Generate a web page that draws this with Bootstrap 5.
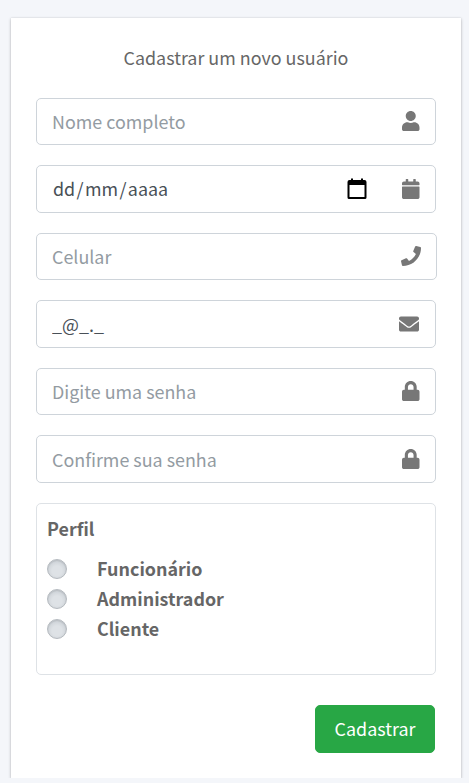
<!DOCTYPE html>
<html lang="pt-BR">
<head>
<meta charset="utf-8">
<meta name="viewport" content="width=device-width, initial-scale=1">
<title>Cadastrar um novo usuário</title>
<link href="https://cdn.jsdelivr.net/npm/bootstrap@5.3.0/dist/css/bootstrap.min.css" rel="stylesheet">
<style>
  body { background: #f4f6fa; color: #666; font-family: "Noto Sans CJK JP", "Noto Sans", sans-serif; font-size: 17.9px; line-height: 30px; }
  .register-box { width: 450px; height: 760px; margin: 18px 0 0 11px; padding: 25px; background: #fff; box-shadow: 0 0 1px rgba(0,0,0,.125), 0 1px 3px rgba(0,0,0,.25); }
  .register-title { margin-bottom: 26.7px; line-height: 28px; }
  .field { height: 47.5px; margin-bottom: 20px; border: 1px solid #ced4da; border-radius: 5px; padding: 0 15.5px 0 15px; }
  .field-wide { margin-right: -1px; }
  .field .form-control { font: inherit; line-height: 30px; height: 31px; padding: 0 0 1.5px !important; color: #495057; border-radius: 0; }
  .field .text-low { padding: 0 !important; }
  .date-input span { margin: 0 .7px; }
  .date-input span:first-child { margin-left: 1px; }
  .field .form-control::placeholder { color: #939ba2; opacity: 1; }
  .field-icon { height: 20px; fill: #777; flex: none; }
  .icon-mail { margin-right: .8px; }
  .picker-icon { width: 20px; height: 22px; margin-right: 35.5px; flex: none; }
  .profile { height: 172px; border: 1px solid #dee2e6; border-radius: 5px; padding: 9.3px 10px; margin-bottom: 30px; }
  .profile-title { margin-bottom: 10px; }
  .choice { height: 30px; }
  .choice .form-check-input { width: 20px; height: 20px; margin: 2px 30px 0 0; border: 1px solid #b5babf; background: radial-gradient(circle at 50% 60%, #dee2e6 0 35%, #cdd2d7 72%); box-shadow: inset 0 1px 1px #b9bec3; }
  .btn-register { width: 120px; height: 48px; margin-right: 1px; padding: 0 0 1.5px; border-radius: 5px; font-size: inherit; line-height: 30px; --bs-btn-bg: #28a745; --bs-btn-border-color: #28a745; }
</style>
</head>
<body>
<main class="register-box">
  <p class="register-title text-center">Cadastrar um novo usuário</p>
  <form>
    <div class="field d-flex align-items-center">
      <input type="text" class="form-control border-0 shadow-none bg-transparent" placeholder="Nome completo" aria-label="Nome completo">
      <svg class="field-icon" viewBox="0 0 448 512"><path d="M224 256c70.7 0 128-57.3 128-128S294.7 0 224 0 96 57.3 96 128s57.3 128 128 128zm89.6 32h-16.7c-22.2 10.2-46.9 16-72.9 16s-50.6-5.8-72.9-16h-16.7C60.2 288 0 348.2 0 422.4V464c0 26.5 21.5 48 48 48h352c26.5 0 48-21.5 48-48v-41.6c0-74.2-60.2-134.4-134.4-134.4z"/></svg>
    </div>
    <div class="field d-flex align-items-center">
      <div class="form-control date-input border-0 shadow-none bg-transparent" role="textbox" tabindex="0" aria-label="Data de nascimento"><span>dd</span><span>/</span><span>mm</span><span>/</span><span>aaaa</span></div>
      <svg class="picker-icon" viewBox="0 0 20 22"><path fill="#000" fill-rule="evenodd" d="M4 .5h2V2h8V.5h2V2h1.5a2 2 0 0 1 2 2v15.5a1.5 1.5 0 0 1-1.5 1.5H2a1.5 1.5 0 0 1-1.5-1.5V4a2 2 0 0 1 2-2H4zM2.5 7v12h15V7z"/></svg>
      <svg class="field-icon" viewBox="0 0 448 512"><path d="M12 192h424c6.6 0 12 5.4 12 12v260c0 26.5-21.5 48-48 48H48c-26.5 0-48-21.5-48-48V204c0-6.6 5.4-12 12-12zm436-44v-36c0-26.5-21.5-48-48-48h-48V12c0-6.6-5.4-12-12-12h-40c-6.6 0-12 5.4-12 12v52H160V12c0-6.6-5.4-12-12-12h-40c-6.6 0-12 5.4-12 12v52H48C21.5 64 0 85.5 0 112v36c0 6.6 5.4 12 12 12h424c6.6 0 12-5.4 12-12z"/></svg>
    </div>
    <div class="field field-wide d-flex align-items-center">
      <input type="text" class="form-control border-0 shadow-none bg-transparent" placeholder="Celular" aria-label="Celular">
      <svg class="field-icon" viewBox="0 0 512 512"><path d="M493.4 24.6l-104-24c-11.3-2.6-22.9 3.3-27.5 13.9l-48 112c-4.2 9.8-1.4 21.3 6.9 28l60.6 49.6c-36 76.7-98.9 140.5-177.2 177.2l-49.6-60.6c-6.8-8.3-18.2-11.1-28-6.9l-112 48C3.9 366.5-2 378.1.6 389.4l24 104C27.1 504.2 36.7 512 48 512c256.1 0 464-207.5 464-464 0-11.2-7.7-20.9-18.6-23.4z"/></svg>
    </div>
    <div class="field d-flex align-items-center">
      <input type="text" class="form-control text-low border-0 shadow-none bg-transparent" value="_@_._" aria-label="E-mail">
      <svg class="field-icon icon-mail" viewBox="0 0 512 512"><path d="M502.3 190.8c3.9-3.1 9.7-.2 9.7 4.7V400c0 26.5-21.5 48-48 48H48c-26.5 0-48-21.5-48-48V195.6c0-5 5.7-7.8 9.7-4.7 22.4 17.4 52.1 39.5 154.1 113.6 21.1 15.4 56.7 47.8 92.2 47.6 35.7.3 72-32.8 92.3-47.6 102-74.1 131.6-96.3 154-113.7zM256 320c23.2.4 56.6-29.2 73.4-41.4 132.7-96.3 142.8-104.7 173.4-128.7 5.8-4.5 9.2-11.5 9.2-18.9v-19c0-26.5-21.5-48-48-48H48c-26.5 0-48 21.5-48 48v19c0 7.4 3.4 14.3 9.2 18.9 30.6 23.9 40.7 32.4 173.4 128.7 16.8 12.2 50.2 41.8 73.4 41.4z"/></svg>
    </div>
    <div class="field d-flex align-items-center">
      <input type="password" class="form-control border-0 shadow-none bg-transparent" placeholder="Digite uma senha" aria-label="Digite uma senha">
      <svg class="field-icon" viewBox="0 0 448 512"><path d="M400 224h-24v-72C376 68.2 307.8 0 224 0S72 68.2 72 152v72H48c-26.5 0-48 21.5-48 48v192c0 26.5 21.5 48 48 48h352c26.5 0 48-21.5 48-48V272c0-26.5-21.5-48-48-48zm-104 0H152v-72c0-39.7 32.3-72 72-72s72 32.3 72 72v72z"/></svg>
    </div>
    <div class="field d-flex align-items-center">
      <input type="password" class="form-control text-low border-0 shadow-none bg-transparent" placeholder="Confirme sua senha" aria-label="Confirme sua senha">
      <svg class="field-icon" viewBox="0 0 448 512"><path d="M400 224h-24v-72C376 68.2 307.8 0 224 0S72 68.2 72 152v72H48c-26.5 0-48 21.5-48 48v192c0 26.5 21.5 48 48 48h352c26.5 0 48-21.5 48-48V272c0-26.5-21.5-48-48-48zm-104 0H152v-72c0-39.7 32.3-72 72-72s72 32.3 72 72v72z"/></svg>
    </div>
    <div class="profile fw-bold">
      <div class="profile-title">Perfil</div>
      <label class="choice d-flex align-items-center"><input class="form-check-input" type="radio" name="perfil">Funcionário</label>
      <label class="choice d-flex align-items-center"><input class="form-check-input" type="radio" name="perfil">Administrador</label>
      <label class="choice d-flex align-items-center"><input class="form-check-input" type="radio" name="perfil">Cliente</label>
    </div>
    <div class="d-flex justify-content-end">
      <button type="button" class="btn btn-success btn-register">Cadastrar</button>
    </div>
  </form>
</main>
<script src="https://cdn.jsdelivr.net/npm/bootstrap@5.3.0/dist/js/bootstrap.bundle.min.js"></script>
</body>
</html>
